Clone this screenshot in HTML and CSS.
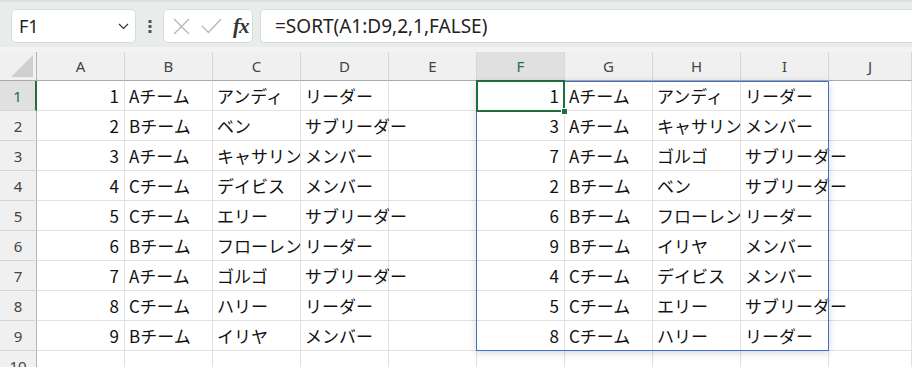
FILE: index.html
```html
<!DOCTYPE html>
<html lang="ja">
  <head>
    <meta charset="UTF-8" />
    <meta name="viewport" content="width=device-width, initial-scale=1.0" />
    <title>SORT</title>
    <link rel="stylesheet" href="styles.css">
  </head>
  <body>
    <div class="toolbar">
      <div class="namebox">
        <span>F1</span>
        <svg class="chevron" width="11" height="7" viewBox="0 0 11 7"><path d="M1 1 L5.5 5.5 L10 1" fill="none" stroke="#333" stroke-width="1.2"/></svg>
      </div>
      <div class="more">
        <svg width="4" height="13" viewBox="0 0 4 13"><rect x="0.5" y="0" width="3" height="3" fill="#555"/><rect x="0.5" y="5" width="3" height="3" fill="#555"/><rect x="0.5" y="10" width="3" height="3" fill="#555"/></svg>
      </div>
      <div class="fxbox">
        <svg width="17" height="17" viewBox="0 0 17 17"><path d="M1 1 L16 16 M16 1 L1 16" stroke="#b8b8b8" stroke-width="1.4"/></svg>
        <svg width="21" height="16" viewBox="0 0 21 16"><path d="M1 8 L7.5 14.5 L20 1" fill="none" stroke="#b8b8b8" stroke-width="1.4"/></svg>
        <span class="fx"><i>f</i><i>x</i></span>
      </div>
      <div class="formula">=SORT(A1:D9,2,1,FALSE)</div>
    </div>
    <div class="band"></div>
    <div class="sheet-wrap">
      <div class="sheet" id="sheet">
        <div class="corner">
          <svg width="22" height="22" viewBox="0 0 22 22"><polygon points="22,0 22,22 0,22" fill="#cfcfcf"/></svg>
        </div>
      </div>
      <div class="overlay">
        <div class="spill"></div>
        <div class="active"></div>
      </div>
    </div>
    <script>
      const letters = ["A", "B", "C", "D", "E", "F", "G", "H", "I", "J"];
      const data = [
        [1, "Aチーム", "アンディ", "リーダー", "", 1, "Aチーム", "アンディ", "リーダー", ""],
        [2, "Bチーム", "ベン", "サブリーダー", "", 3, "Aチーム", "キャサリン", "メンバー", ""],
        [3, "Aチーム", "キャサリン", "メンバー", "", 7, "Aチーム", "ゴルゴ", "サブリーダー", ""],
        [4, "Cチーム", "デイビス", "メンバー", "", 2, "Bチーム", "ベン", "サブリーダー", ""],
        [5, "Cチーム", "エリー", "サブリーダー", "", 6, "Bチーム", "フローレンス", "リーダー", ""],
        [6, "Bチーム", "フローレンス", "リーダー", "", 9, "Bチーム", "イリヤ", "メンバー", ""],
        [7, "Aチーム", "ゴルゴ", "サブリーダー", "", 4, "Cチーム", "デイビス", "メンバー", ""],
        [8, "Cチーム", "ハリー", "リーダー", "", 5, "Cチーム", "エリー", "サブリーダー", ""],
        [9, "Bチーム", "イリヤ", "メンバー", "", 8, "Cチーム", "ハリー", "リーダー", ""],
        ["", "", "", "", "", "", "", "", "", ""],
      ];

      const sheet = document.getElementById("sheet");

      function el(cls, text) {
        const div = document.createElement("div");
        div.className = cls;
        if (text !== undefined) div.textContent = text;
        return div;
      }

      letters.forEach((l) => {
        sheet.appendChild(el(l === "F" ? "colhead sel" : "colhead", l));
      });

      data.forEach((row, r) => {
        sheet.appendChild(el(r === 0 ? "rowhead sel" : "rowhead", r + 1));
        row.forEach((value, c) => {
          const cell = el("cell");
          if (typeof value === "number") {
            cell.classList.add("num");
            cell.textContent = value;
          } else if (value) {
            const span = el("txt");
            span.textContent = value;
            cell.appendChild(span);
            if (row[c + 1] === "" || c === row.length - 1) {
              cell.classList.add("over");
            }
          }
          sheet.appendChild(cell);
        });
      });
    </script>
  </body>
</html>
```

FILE: styles.css
```css
body {
  margin: 0;
  width: 912px;
  height: 367px;
  overflow: hidden;
  background-color: #fff;
  font-family: "Noto Sans", sans-serif;
}

.toolbar {
  display: flex;
  align-items: flex-start;
  height: 47px;
  box-sizing: border-box;
  padding: 9px 0 0 11px;
  background-color: #e8ecea;
  border-top: 2px solid #dde2df;
}

.namebox {
  display: flex;
  align-items: center;
  justify-content: space-between;
  width: 125px;
  height: 34px;
  box-sizing: border-box;
  margin-top: -2px;
  padding: 0 6px 0 7px;
  background-color: #fff;
  border: 1px solid #d9dcda;
  border-radius: 5px;
  font-size: 18px;
  color: #222;
}

.more {
  display: flex;
  justify-content: center;
  align-items: center;
  width: 27px;
  height: 34px;
  margin-top: -2px;
}

.fxbox {
  display: flex;
  align-items: center;
  gap: 11px;
  width: 90px;
  height: 34px;
  box-sizing: border-box;
  margin-top: -2px;
  padding: 0 0 0 9px;
  background-color: #fff;
  border: 1px solid #d9dcda;
  border-radius: 5px;
}

.fx {
  font-family: "Liberation Serif", serif;
  font-size: 21px;
  font-weight: bold;
  color: #333;
  letter-spacing: -1px;
}

.formula {
  flex: 1;
  height: 34px;
  box-sizing: border-box;
  margin: -2px 0 0 7px;
  padding: 0 0 0 14px;
  line-height: 32px;
  background-color: #fff;
  border: 1px solid #d9dcda;
  border-right: none;
  border-radius: 5px 0 0 5px;
  font-size: 19px;
  color: #222;
}

.band {
  height: 5px;
  background-color: #f3f3f3;
}

.sheet-wrap {
  display: grid;
}

.sheet,
.overlay {
  grid-area: 1 / 1;
  display: grid;
  grid-template-columns: 37px repeat(9, 88px) 1fr;
  grid-template-rows: 29px repeat(10, 30px);
}

.sheet {
  background-color: #fff;
}

.overlay {
  z-index: 2;
  pointer-events: none;
}

.corner {
  display: flex;
  justify-content: flex-end;
  align-items: flex-end;
  padding: 0 3px 3px 0;
  background-color: #f0f0f0;
  border-right: 1px solid #b4b4b4;
  border-bottom: 1px solid #a9a9a9;
}

.colhead {
  display: flex;
  justify-content: center;
  align-items: center;
  background-color: #f0f0f0;
  border-right: 1px solid #d6d6d6;
  border-bottom: 1px solid #a9a9a9;
  font-size: 15px;
  color: #444;
}

.colhead.sel {
  background-color: #e0e0e0;
  color: #1e6e42;
}

.rowhead {
  display: flex;
  justify-content: center;
  align-items: center;
  background-color: #f0f0f0;
  border-right: 1px solid #b4b4b4;
  border-bottom: 1px solid #d6d6d6;
  font-size: 15px;
  color: #444;
}

.rowhead.sel {
  background-color: #e0e0e0;
  color: #1e6e42;
  border-right: 2px solid #1e6e42;
}

.cell {
  overflow: hidden;
  white-space: nowrap;
  padding: 1px 4px 0 4px;
  border-right: 1px solid #e1e1e1;
  border-bottom: 1px solid #e1e1e1;
  font-family: "Noto Sans CJK JP", sans-serif;
  font-size: 17px;
  line-height: 28px;
  color: #111;
}

.cell.num {
  text-align: right;
  padding-right: 5px;
}

.cell.over {
  overflow: visible;
}

.txt {
  position: relative;
  z-index: 1;
  background-color: #fff;
}

.spill {
  grid-column: 7 / 11;
  grid-row: 2 / 11;
  margin-left: -1px;
  border: 1px solid #3b6fd4;
  box-shadow: 0 2px 8px rgba(0, 0, 0, 0.16);
}

.active {
  grid-column: 7;
  grid-row: 2;
  position: relative;
  margin: -1px 0 -1px -1px;
  border: 2px solid #1e6e42;
}

.active::after {
  content: "";
  position: absolute;
  right: -5px;
  bottom: -5px;
  width: 5px;
  height: 5px;
  background-color: #1e6e42;
  border: 1px solid #fff;
}
```
